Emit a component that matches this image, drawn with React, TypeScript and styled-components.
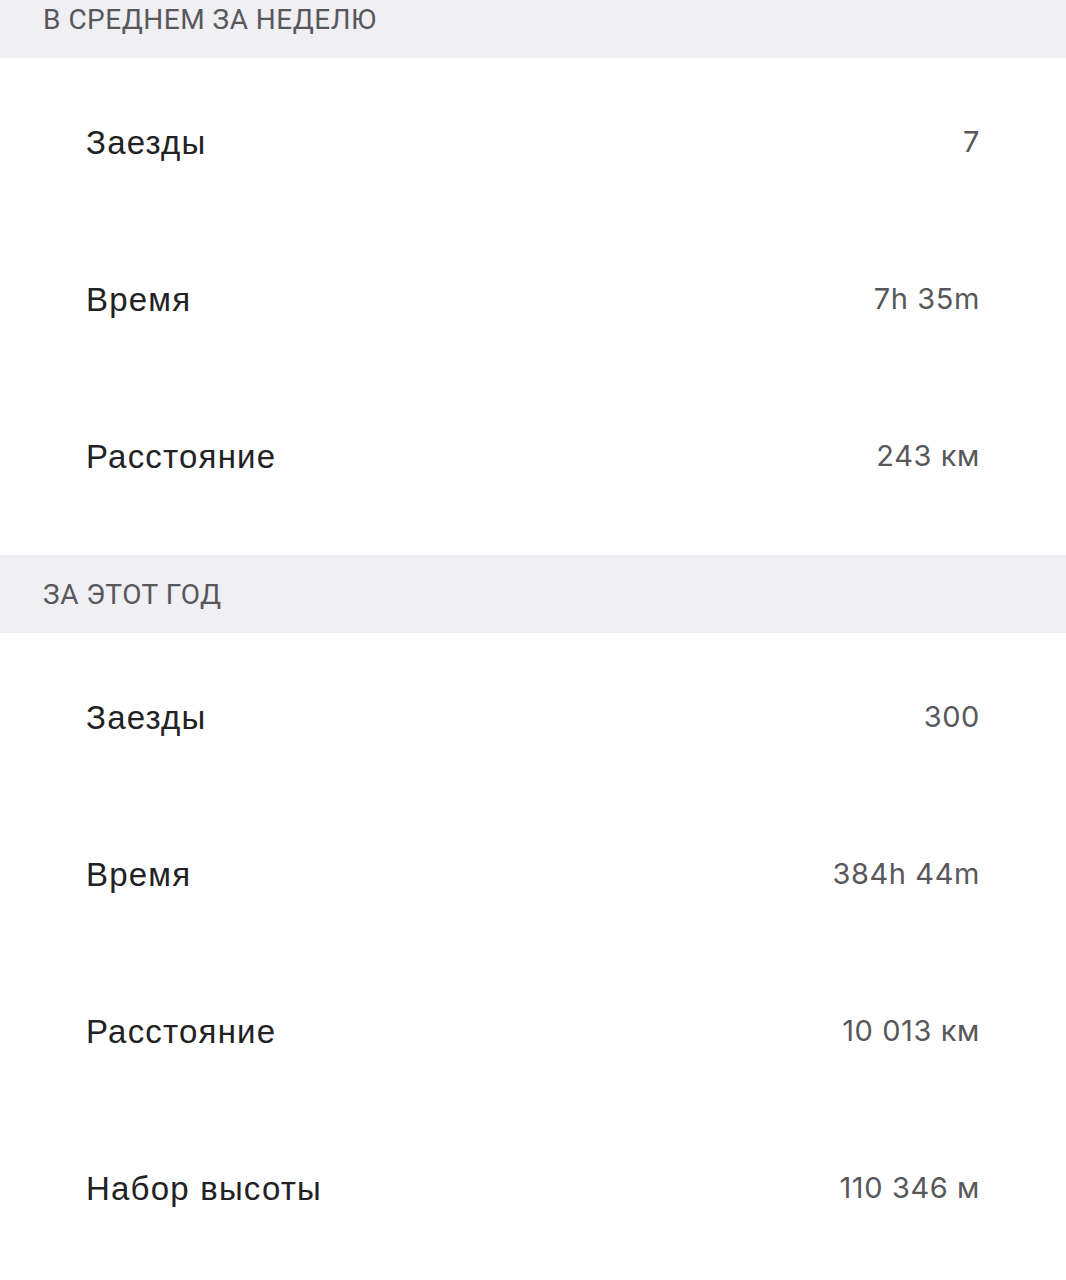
import React, { FC } from 'react';
import styled, { createGlobalStyle } from 'styled-components';

const GlobalStyle = createGlobalStyle`
  html, body {
    margin: 0;
    padding: 0;
    background: #fff;
    overflow: hidden;
  }
`;

// страница прокручена — верх первого заголовка уходит за край
const Page = styled.div`
  width: 1066px;
  margin-top: -20px;
  display: flex;
  flex-direction: column;
`;

const SectionHeader = styled.h2`
  margin: 0;
  height: 78px;
  padding: 0 43px;
  display: flex;
  align-items: center;
  background-color: #efeff4;
  font-family: Roboto, 'Liberation Sans', sans-serif;
  font-weight: 400;
  font-size: 28px;
  letter-spacing: 0.5px;
  color: #58585c;
  text-transform: uppercase;
`;

const StatList = styled.ul`
  list-style: none;
  margin: 0;
  padding: 6px 86px 20px;
  display: flex;
  flex-direction: column;
`;

const StatRow = styled.li`
  height: 157px;
  display: flex;
  align-items: center;
  justify-content: space-between;
`;

const Label = styled.span`
  font-family: 'Liberation Sans', Arial, sans-serif;
  font-size: 33px;
  letter-spacing: 1.2px;
  font-weight: 400;
  color: #222224;
`;

const Value = styled.span`
  font-family: Inter, 'Open Sans', sans-serif;
  font-size: 29px;
  letter-spacing: 0.6px;
  font-weight: 400;
  color: #58585c;
  margin-top: -2px;
`;

type Stat = { label: string; value: string };

const weekStats: Stat[] = [
  { label: 'Заезды', value: '7' },
  { label: 'Время', value: '7h 35m' },
  { label: 'Расстояние', value: '243 км' },
];

const yearStats: Stat[] = [
  { label: 'Заезды', value: '300' },
  { label: 'Время', value: '384h 44m' },
  { label: 'Расстояние', value: '10 013 км' },
  { label: 'Набор высоты', value: '110 346 м' },
];

const StatSection: FC<{ title: string; stats: Stat[] }> = ({ title, stats }) => (
  <section>
    <SectionHeader>{title}</SectionHeader>
    <StatList>
      {stats.map((s) => (
        <StatRow key={s.label}>
          <Label>{s.label}</Label>
          <Value>{s.value}</Value>
        </StatRow>
      ))}
    </StatList>
  </section>
);

const App: FC = () => (
  <>
    <GlobalStyle />
    <Page>
      <StatSection title="В среднем за неделю" stats={weekStats} />
      <StatSection title="За этот год" stats={yearStats} />
    </Page>
  </>
);

export default App;
